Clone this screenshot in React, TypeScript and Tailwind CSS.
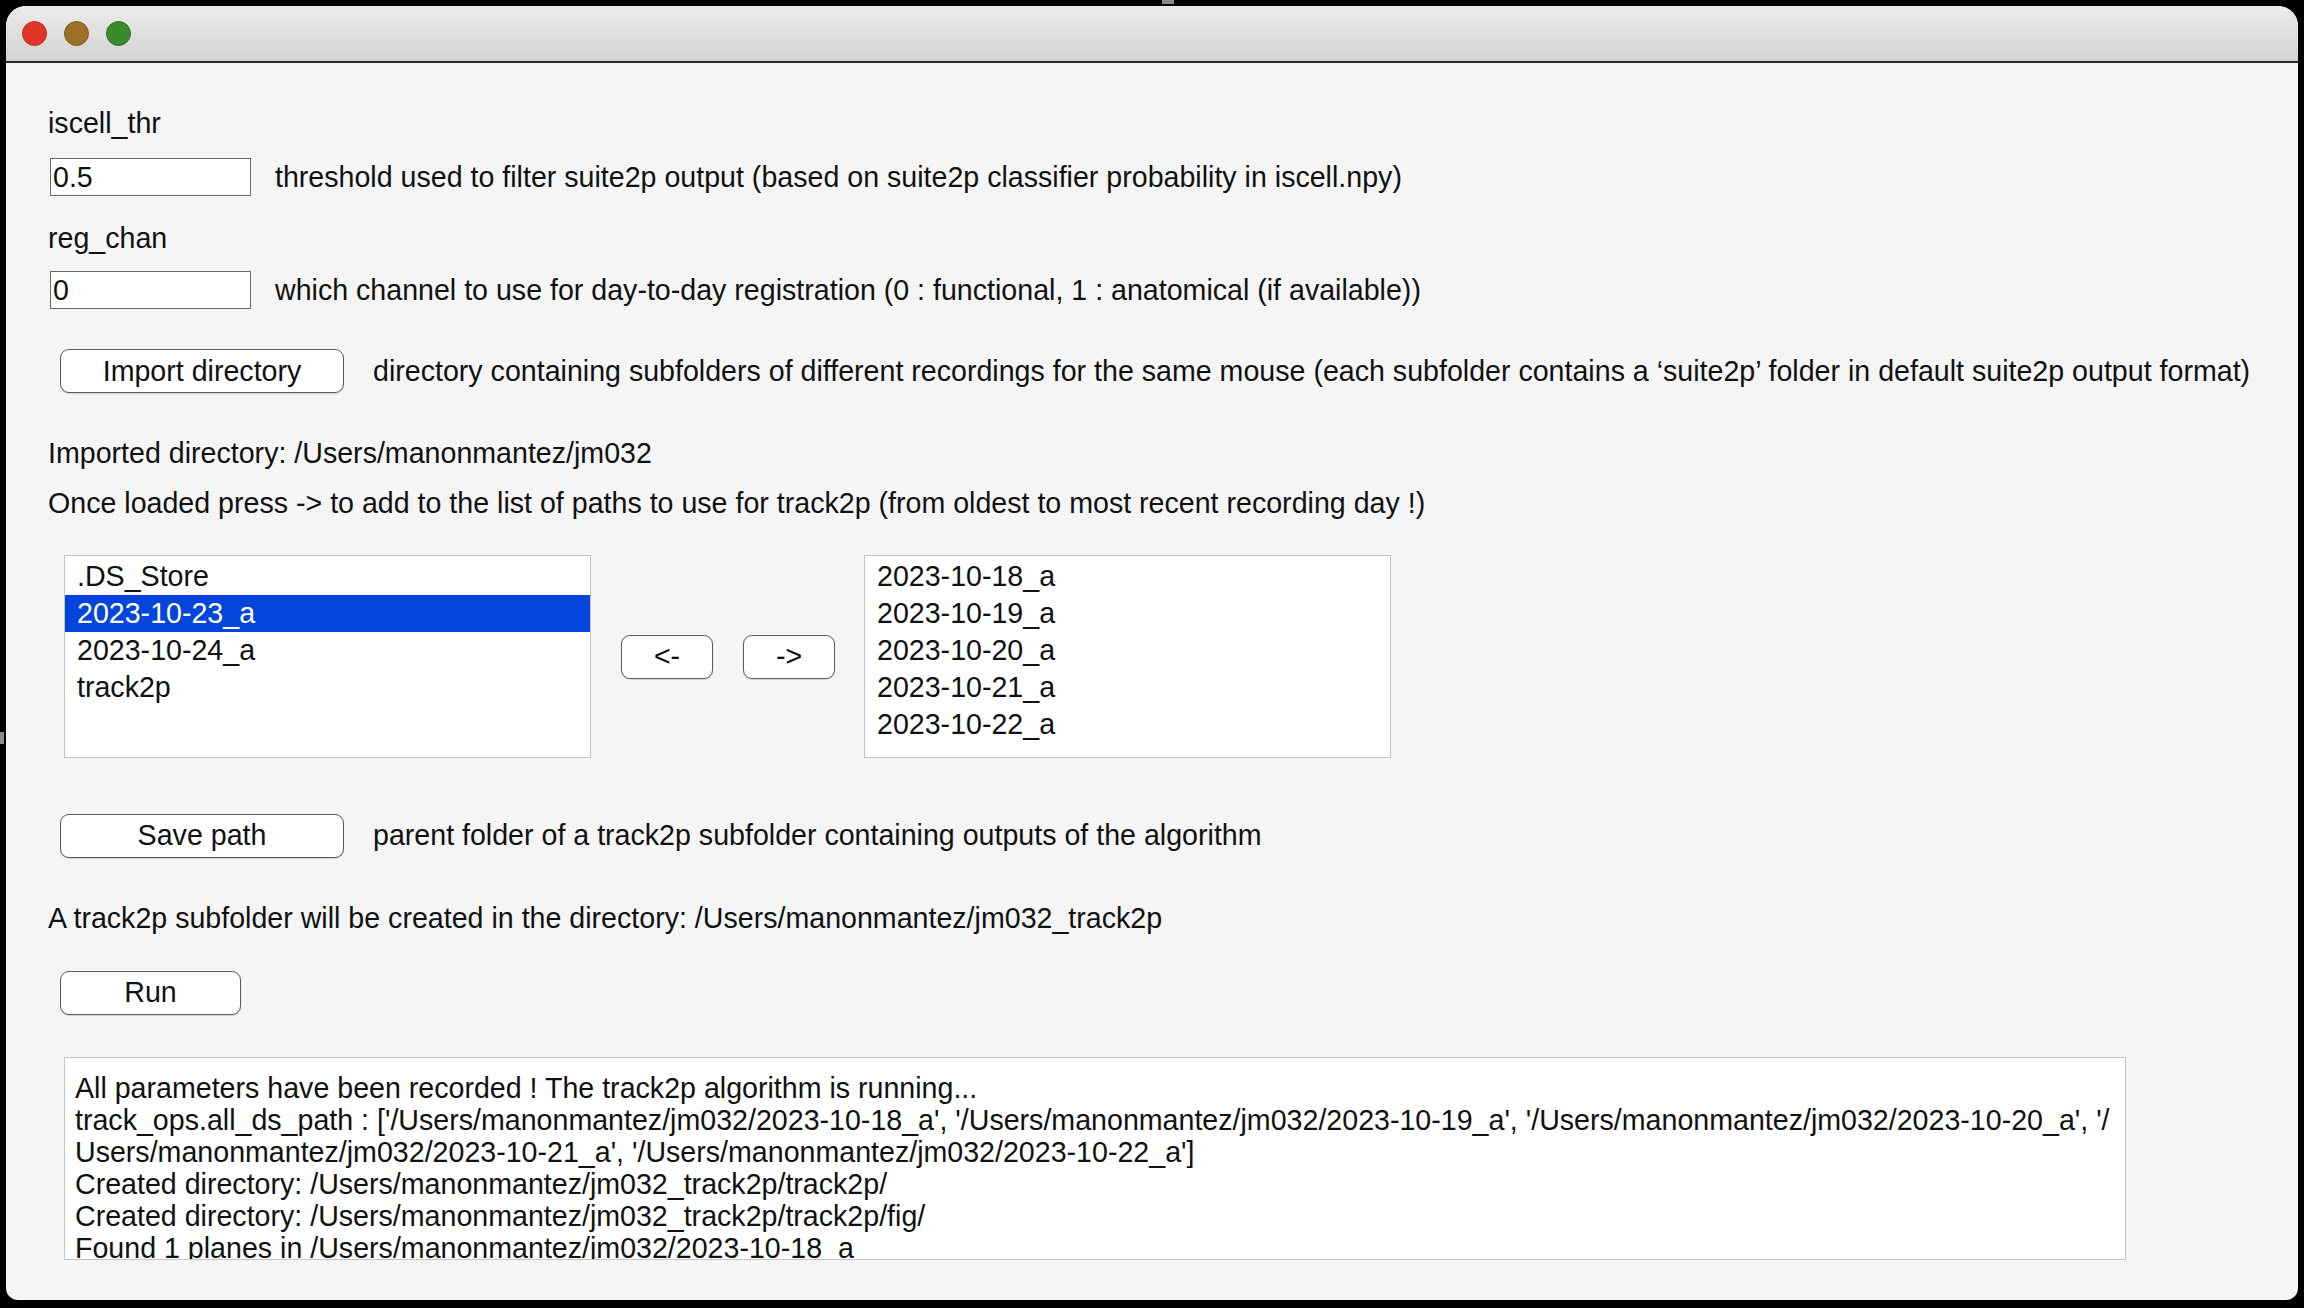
import React from 'react';

const leftItems = ['.DS_Store', '2023-10-23_a', '2023-10-24_a', 'track2p'];
const rightItems = ['2023-10-18_a', '2023-10-19_a', '2023-10-20_a', '2023-10-21_a', '2023-10-22_a'];

const logLines = [
  'All parameters have been recorded ! The track2p algorithm is running...',
  "track_ops.all_ds_path : ['/Users/manonmantez/jm032/2023-10-18_a', '/Users/manonmantez/jm032/2023-10-19_a', '/Users/manonmantez/jm032/2023-10-20_a', '/",
  "Users/manonmantez/jm032/2023-10-21_a', '/Users/manonmantez/jm032/2023-10-22_a']",
  'Created directory: /Users/manonmantez/jm032_track2p/track2p/',
  'Created directory: /Users/manonmantez/jm032_track2p/track2p/fig/',
  'Found 1 planes in /Users/manonmantez/jm032/2023-10-18_a',
];

function Button({ label, width }: { label: string; width: string }) {
  return (
    <button
      className={`${width} h-[44px] shrink-0 rounded-[9px] border border-[#5a5a5a] bg-white text-center text-[28.6px] leading-none text-[#111] shadow-[0_1px_1px_rgba(0,0,0,0.15)]`}
    >
      {label}
    </button>
  );
}

function ListBox({ items, selected }: { items: string[]; selected?: string }) {
  return (
    <div className="h-[203px] w-[527px] shrink-0 border border-[#c4c4c4] bg-white pt-[2px]">
      {items.map((item) => (
        <div
          key={item}
          className={
            item === selected
              ? 'h-[37px] bg-[#0645dc] pl-[12px] text-[28.6px] leading-[37px] text-white'
              : 'h-[37px] pl-[12px] text-[28.6px] leading-[37px] text-[#111]'
          }
        >
          {item}
        </div>
      ))}
    </div>
  );
}

export default function App() {
  return (
    <div className="relative h-[1308px] w-[2304px] overflow-hidden bg-black p-[6px] font-['Liberation_Sans',Arial,sans-serif]">
      {/* resize handle marks from the screenshot */}
      <div className="absolute left-[1162px] top-0 h-[4px] w-[12px] bg-[#8a8a8a]" />
      <div className="absolute left-0 top-[732px] h-[12px] w-[4px] bg-[#8a8a8a]" />

      <div className="flex h-[1294px] w-[2292px] flex-col overflow-hidden rounded-t-[20px] rounded-b-[12px] bg-[#f5f5f5]">
        {/* title bar */}
        <div className="flex h-[57px] shrink-0 items-center gap-[17px] border-b-2 border-[#262626] bg-gradient-to-b from-[#ececec] to-[#d2d2d2] pl-[16px]">
          <span className="h-[25px] w-[25px] rounded-full border border-[#c0271f] bg-[#e1342b]" />
          <span className="h-[25px] w-[25px] rounded-full border border-[#7d5a1c] bg-[#9c7026]" />
          <span className="h-[25px] w-[25px] rounded-full border border-[#2a6f1e] bg-[#3b8b2c]" />
        </div>

        <div className="flex flex-col pl-[42px] text-[28.6px] text-[#111]">
          <div className="mt-[44px] h-[32px] leading-[32px]">iscell_thr</div>
          <div className="mt-[19px] flex h-[38px] items-center">
            <div className="ml-[2px] flex h-[38px] w-[201px] items-center border border-[#6a6a6a] bg-white pl-[2px] leading-none">0.5</div>
            <span className="ml-[24px] leading-none">threshold used to filter suite2p output (based on suite2p classifier probability in iscell.npy)</span>
          </div>

          <div className="mt-[26px] h-[32px] leading-[32px]">reg_chan</div>
          <div className="mt-[17px] flex h-[38px] items-center">
            <div className="ml-[2px] flex h-[38px] w-[201px] items-center border border-[#6a6a6a] bg-white pl-[2px] leading-none">0</div>
            <span className="ml-[24px] leading-none">which channel to use for day-to-day registration (0 : functional, 1 : anatomical (if available))</span>
          </div>

          <div className="mt-[40px] flex h-[44px] items-center pl-[12px]">
            <Button label="Import directory" width="w-[284px]" />
            <span className="ml-[29px] leading-none">directory containing subfolders of different recordings for the same mouse (each subfolder contains a ‘suite2p’ folder in default suite2p output format)</span>
          </div>

          <div className="mt-[44px] h-[32px] leading-[32px]">Imported directory: /Users/manonmantez/jm032</div>
          <div className="mt-[18px] h-[32px] leading-[32px]">Once loaded press -&gt; to add to the list of paths to use for track2p (from oldest to most recent recording day !)</div>

          <div className="mt-[36px] flex items-center pl-[16px]">
            <ListBox items={leftItems} selected="2023-10-23_a" />
            <div className="ml-[30px] flex gap-[30px]">
              <Button label="<-" width="w-[92px]" />
              <Button label="->" width="w-[92px]" />
            </div>
            <div className="ml-[29px]">
              <ListBox items={rightItems} />
            </div>
          </div>

          <div className="mt-[55px] flex h-[45px] items-center pl-[12px]">
            <Button label="Save path" width="w-[284px]" />
            <span className="ml-[29px] leading-none">parent folder of a track2p subfolder containing outputs of the algorithm</span>
          </div>

          <div className="mt-[44px] h-[32px] leading-[32px]">A track2p subfolder will be created in the directory: /Users/manonmantez/jm032_track2p</div>

          <div className="mt-[36px] flex h-[45px] items-center pl-[12px]">
            <Button label="Run" width="w-[181px]" />
          </div>

          <div className="ml-[16px] mt-[42px] h-[203px] w-[2062px] overflow-hidden border border-[#c4c4c4] bg-white pl-[10px] pt-[14px]">
            {logLines.map((line, i) => (
              <div key={i} className="h-[32px] whitespace-nowrap leading-[32px]">
                {line}
              </div>
            ))}
          </div>
        </div>
      </div>
    </div>
  );
}
